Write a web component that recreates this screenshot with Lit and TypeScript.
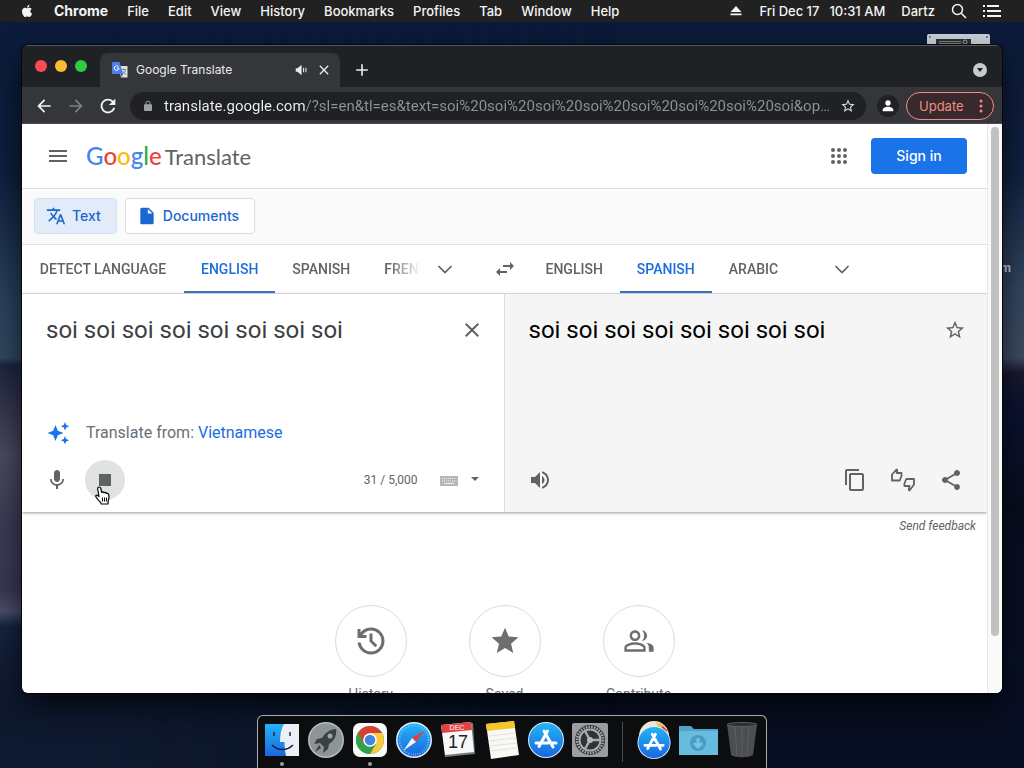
import { LitElement, html, css, svg, nothing } from "lit";
import { customElement, property } from "lit/decorators.js";
import { classMap } from "lit/directives/class-map.js";

const PATHS: Record<string, string> = {
  menu: "M3 18h18v-2H3v2zm0-5h18v-2H3v2zm0-7v2h18V6H3z",
  translate:
    "M12.87 15.07l-2.54-2.51.03-.03c1.74-1.94 2.98-4.17 3.71-6.53H17V4h-7V2H8v2H1v1.99h11.17C11.5 7.92 10.44 9.75 9 11.35 8.07 10.32 7.3 9.19 6.69 8h-2c.73 1.63 1.73 3.17 2.98 4.56l-5.09 5.02L4 19l5-5 3.11 3.11.76-2.04zM18.5 10h-2L12 22h2l1.12-3h4.75L21 22h2l-4.5-12zm-2.62 7l1.62-4.33L19.12 17h-3.24z",
  file: "M6 2c-1.1 0-1.99.9-1.99 2L4 20c0 1.1.89 2 1.99 2H18c1.1 0 2-.9 2-2V8l-6-6H6zm7 7V3.5L18.5 9H13z",
  swap: "M6.99 11L3 15l3.99 4v-3H14v-2H6.99v-3zM21 9l-3.99-4v3H10v2h7.01v3L21 9z",
  close: "M19 6.41L17.59 5 12 10.59 6.41 5 5 6.41 10.59 12 5 17.59 6.41 19 12 13.41 17.59 19 19 17.59 13.41 12z",
  mic: "M12 14c1.66 0 2.99-1.34 2.99-3L15 5c0-1.66-1.34-3-3-3S9 3.34 9 5v6c0 1.66 1.34 3 3 3zm5.3-3c0 3-2.54 5.1-5.3 5.1S6.7 14 6.7 11H5c0 3.41 2.72 6.23 6 6.72V21h2v-3.28c3.28-.48 6-3.3 6-6.72h-1.7z",
  stop: "M6 6h12v12H6z",
  volume:
    "M3 9v6h4l5 5V4L7 9H3zm13.5 3c0-1.77-1.02-3.29-2.5-4.03v8.05c1.48-.73 2.5-2.25 2.5-4.02zM14 3.23v2.06c2.89.86 5 3.54 5 6.71s-2.11 5.85-5 6.71v2.06c4.01-.91 7-4.49 7-8.77s-2.99-7.86-7-8.77z",
  copy: "M16 1H4c-1.1 0-2 .9-2 2v14h2V3h12V1zm3 4H8c-1.1 0-2 .9-2 2v14c0 1.1.9 2 2 2h11c1.1 0 2-.9 2-2V7c0-1.1-.9-2-2-2zm0 16H8V7h11v14z",
  share:
    "M18 16.08c-.76 0-1.44.3-1.96.77L8.91 12.7c.05-.23.09-.46.09-.7s-.04-.47-.09-.7l7.05-4.11c.54.5 1.25.81 2.04.81 1.66 0 3-1.34 3-3s-1.34-3-3-3-3 1.34-3 3c0 .24.04.47.09.7L8.04 9.81C7.5 9.31 6.79 9 6 9c-1.66 0-3 1.34-3 3s1.34 3 3 3c.79 0 1.5-.31 2.04-.81l7.12 4.16c-.05.21-.08.43-.08.65 0 1.61 1.31 2.92 2.92 2.92 1.61 0 2.92-1.31 2.92-2.92s-1.31-2.92-2.92-2.92z",
  starOutline:
    "M22 9.24l-7.19-.62L12 2 9.19 8.63 2 9.24l5.46 4.73L5.82 21 12 17.27 18.18 21l-1.63-7.03L22 9.24zM12 15.4l-3.76 2.27 1-4.28-3.32-2.88 4.38-.38L12 6.1l1.71 4.04 4.38.38-3.32 2.88 1 4.28L12 15.4z",
  star: "M12 17.27L18.18 21l-1.64-7.03L22 9.24l-7.19-.61L12 2 9.19 8.63 2 9.24l5.46 4.73L5.82 21z",
  history:
    "M12 21q-3.45 0-6.012-2.288T3.05 13H5.1q.35 2.6 2.313 4.3T12 19q2.925 0 4.963-2.037T19 12t-2.037-4.963T12 5q-1.725 0-3.225.8T6.25 8H9v2H3V4h2v2.35q1.275-1.6 3.113-2.475T12 3q1.875 0 3.513.713t2.85 1.924 1.925 2.85T21 12t-.712 3.513-1.925 2.85-2.85 1.925T12 21m2.8-4.8L11 12.4V7h2v4.6l3.2 3.2z",
  people:
    "M9 12c2.21 0 4-1.79 4-4s-1.79-4-4-4-4 1.79-4 4 1.79 4 4 4zm0-6.2c1.2 0 2.2 1 2.2 2.2s-1 2.2-2.2 2.2S6.8 9.2 6.8 8s1-2.2 2.2-2.2zM9 13c-2.67 0-8 1.34-8 4v3h16v-3c0-2.66-5.33-4-8-4zm6.2 5.2H2.8V17c0-.9 3.2-2.2 6.2-2.2s6.2 1.3 6.2 2.2v1.2zM14.2 11.9c2.1-.1 3.8-1.8 3.8-3.9s-1.7-3.9-3.8-4c1.2 1.1 1.6 2.5 1.6 4s-.4 2.9-1.6 3.9zM17.4 13.3c1.3.9 2 2.1 2 3.7v3H23v-3c0-2.1-2.9-3.3-5.6-3.7z",
  back: "M20 11H7.83l5.59-5.59L12 4l-8 8 8 8 1.41-1.41L7.83 13H20v-2z",
  forward: "M12 4l-1.41 1.41L16.17 11H4v2h12.17l-5.58 5.59L12 20l8-8z",
  reload:
    "M17.65 6.35C16.2 4.9 14.21 4 12 4c-4.42 0-7.99 3.58-7.99 8s3.57 8 7.99 8c3.73 0 6.84-2.55 7.73-6h-2.08c-.82 2.33-3.04 4-5.65 4-3.31 0-6-2.69-6-6s2.69-6 6-6c1.66 0 3.14.69 4.22 1.78L13 11h7V4l-2.35 2.35z",
  lock: "M18 8.5h-1v-2c0-2.76-2.24-5-5-5s-5 2.24-5 5v2H6c-1.1 0-2 .9-2 2V20c0 1.1.9 2 2 2h12c1.1 0 2-.9 2-2v-9.5c0-1.1-.9-2-2-2zm-2.9 0H8.9v-2c0-1.71 1.39-3.1 3.1-3.1s3.1 1.39 3.1 3.1v2z",
  person: "M12 11.5a4 4 0 1 0 0-8 4 4 0 0 0 0 8zm0 1.700c-3 0-8 1.500-8 4.300v2.500h16v-2.500c0-2.800-5-4.300-8-4.300z",
  plus: "M19 13h-6v6h-2v-6H5v-2h6V5h2v6h6v2z",
  sound: "M3 9v6h3l7 6V3L6 9H3zM15.500 8v8h1.800V8zM19.500 8v8h1.800V8z",
  apple:
    "M17.05 12.5c0-2.3 1.9-3.4 2-3.5-1.1-1.6-2.8-1.8-3.4-1.85-1.45-.15-2.8.85-3.55.85-.7 0-1.85-.8-3.05-.8-1.55 0-3 .9-3.8 2.3-1.65 2.85-.4 7 1.15 9.3.8 1.1 1.7 2.35 2.95 2.3 1.2-.05 1.65-.75 3.05-.75 1.45 0 1.85.75 3.1.75 1.3 0 2.1-1.15 2.85-2.25.9-1.3 1.25-2.55 1.3-2.6-.05-.05-2.55-1-2.6-3.75zM14.8 5.8c.6-.8 1.1-1.9.95-3-.9.05-2.05.65-2.7 1.4-.6.7-1.15 1.85-1 2.9 1.05.1 2.1-.5 2.75-1.3z",
  sparkle:
    "M9.500 4l2.300 5.700 5.700 2.300-5.700 2.300L9.500 20l-2.300-5.700L1.500 12l5.700-2.300zM19 1l1.200 3 3 1.200-3 1.200L19 9.400l-1.200-3-3-1.200 3-1.200zM19 15l1.200 3 3 1.200-3 1.200-1.200 3-1.200-3-3-1.200 3-1.200z",
};

const icon = (name: string, size = 24) =>
  html`<svg width=${size} height=${size} viewBox="0 0 24 24" fill="currentColor" aria-hidden="true">
    <path d=${PATHS[name]}></path>
  </svg>`;

const chevron = html`<svg width="24" height="24" viewBox="0 0 24 24" fill="none" stroke="currentColor" stroke-width="1.7" aria-hidden="true">
  <path d="M5.500 9L12 15.500 18.500 9"></path>
</svg>`;

const reset = css`
  *,
  *::before,
  *::after {
    box-sizing: border-box;
  }
  svg {
    display: block;
    flex: none;
  }
  button {
    display: flex;
    align-items: center;
    justify-content: center;
    margin: 0;
    padding: 0;
    border: 0;
    background: none;
    color: inherit;
    font: inherit;
  }
  a {
    color: inherit;
    text-decoration: none;
  }
`;

@customElement("menu-bar")
class MenuBar extends LitElement {
  static styles = [
    reset,
    css`
      :host {
        display: flex;
        align-items: center;
        justify-content: space-between;
        height: 22px;
        flex: none;
        padding: 0 23px 0 19px;
        background: #212121;
        color: #f4f4f4;
        font: 500 13px/22px Inter, Roboto, sans-serif;
        white-space: nowrap;
      }
      .menus,
      .status {
        display: flex;
        align-items: center;
      }
      .menus {
        gap: 19px;
      }
      .status {
        gap: 16px;
      }
      .app {
        font-size: 14px;
        font-weight: 700;
      }
      .clock {
        display: flex;
        gap: 10px;
      }
    `,
  ];

  render() {
    const menus = ["File", "Edit", "View", "History", "Bookmarks", "Profiles", "Tab", "Window", "Help"];
    return html`
      <nav class="menus">
        <button aria-label="Apple menu">${icon("apple", 16)}</button>
        <button class="app">Chrome</button>
        ${menus.map((m) => html`<button>${m}</button>`)}
      </nav>
      <div class="status">
        <svg width="14" height="14" viewBox="0 0 14 14" fill="currentColor"><path d="M7 2l5.500 6h-11zM1.500 9.500h11v1.800h-11z"></path></svg>
        <span class="clock"><span>Fri Dec 17</span><span>10:31 AM</span></span>
        <span>Dartz</span>
        <button aria-label="Search">
          <svg width="16" height="16" viewBox="0 0 16 16" fill="none" stroke="currentColor" stroke-width="1.500"><circle cx="6.500" cy="6.500" r="5"></circle><path d="M10.200 10.200L15 15"></path></svg>
        </button>
        <button aria-label="Notifications">
          <svg width="18" height="14" viewBox="0 0 18 14" fill="currentColor"><path d="M0 1h2v2H0zM4 1h12v2H4zM0 6h2v2H0zM4 6h14v2H4zM0 11h2v2H0zM4 11h14v2H4z"></path></svg>
        </button>
      </div>
    `;
  }
}

@customElement("browser-chrome")
class BrowserChrome extends LitElement {
  static styles = [
    reset,
    css`
      :host {
        display: block;
        flex: none;
        color: #e8eaed;
        font: 400 14px/20px Inter, Roboto, sans-serif;
      }
      .strip {
        display: flex;
        align-items: center;
        height: 42px;
        padding: 0 15px 0 13px;
        background: #202124;
        box-shadow: inset 0 1px #55575a;
      }
      .lights {
        display: flex;
        gap: 8px;
        margin-right: 13px;
      }
      .light {
        width: 12px;
        height: 12px;
        border-radius: 50%;
      }
      .red {
        background: #fc4a51;
      }
      .yellow {
        background: #fdbc2f;
      }
      .green {
        background: #2fcb42;
      }
      .tab {
        display: flex;
        align-items: center;
        align-self: flex-end;
        gap: 8px;
        width: 240px;
        height: 34px;
        padding: 0 8px 0 12px;
        border-radius: 8px 8px 0 0;
        background: #35363a;
        font-size: 12px;
      }
      .title {
        flex: 1;
      }
      .add {
        margin: 8px auto 0 12px;
      }
      .more {
        width: 14px;
        height: 14px;
        margin-top: 8px;
        border-radius: 50%;
        background: #c8cacd;
        color: #202124;
      }
      .bar {
        display: flex;
        align-items: center;
        height: 37px;
        padding: 0 8px 0 6px;
        background: #35363a;
        box-shadow: inset 0 -1px #4a4b4e;
      }
      .nav {
        width: 32px;
        height: 28px;
        color: #f1f3f4;
      }
      .off {
        color: #7d7f83;
      }
      .address {
        display: flex;
        align-items: center;
        flex: 1;
        min-width: 0;
        height: 28px;
        margin: 0 11px 0 6px;
        padding: 0 10px 0 12px;
        border-radius: 14px;
        background: #202124;
        color: #9aa0a6;
      }
      .url {
        flex: 1;
        min-width: 0;
        height: 20px;
        margin: 0 8px 0 10px;
        padding: 0;
        border: 0;
        outline: 0;
        background: linear-gradient(90deg, #f1f3f4 141px, #8f9398 141px);
        -webkit-background-clip: text;
        background-clip: text;
        color: transparent;
        -webkit-text-fill-color: transparent;
        font: 400 15px/20px Roboto, sans-serif;
        text-overflow: ellipsis;
      }
      .bookmark {
        color: #dadce0;
      }
      .avatar {
        width: 22px;
        height: 22px;
        margin-right: 7px;
        border-radius: 50%;
        background: #202124;
        color: #fff;
      }
      .update {
        justify-content: space-between;
        width: 88px;
        height: 28px;
        padding: 0 10px 0 12px;
        border: 1px solid #ee8d8d;
        border-radius: 14px;
        background: #38292c;
        color: #f28b82;
        font-size: 13px;
      }
    `,
  ];

  render() {
    return html`
      <div class="strip">
        <div class="lights">
          ${["red", "yellow", "green"].map((c) => html`<button class="light ${c}" aria-label=${c}></button>`)}
        </div>
        <div class="tab">
          <svg width="16" height="16" viewBox="0 0 16 16">
            <path d="M6 4h9.500v11.500H9z" fill="#dfe1dc"></path>
            <path d="M9 7.500h5M11.500 6.500v1M13.500 8c-.5 2-2 3.500-3.500 4.200M10.500 9c.8 1.500 2 2.700 3.500 3.500" stroke="#7c8b8e" fill="none"></path>
            <path d="M1 0h6.500l3.500 12H1a1 1 0 0 1-1-1V1a1 1 0 0 1 1-1z" fill="#4a80e8"></path>
            <path d="M8.500 12H11l-1.500 3z" fill="#2f55c0"></path>
            <path d="M7 6.100H4.900M6.300 4.500a2.300 2.300 0 1 0 .7 1.700" stroke="#fff" fill="none"></path>
          </svg>
          <span class="title">Google Translate</span>
          <button aria-label="Mute tab">${icon("sound", 14)}</button>
          <button aria-label="Close tab">${icon("close", 16)}</button>
        </div>
        <button class="add" aria-label="New tab">${icon("plus", 20)}</button>
        <button class="more" aria-label="Search tabs">
          <svg width="8" height="8" viewBox="0 0 8 8" fill="currentColor"><path d="M1 2h6L4 6z"></path></svg>
        </button>
      </div>
      <div class="bar">
        <button class="nav" aria-label="Back">${icon("back", 20)}</button>
        <button class="nav off" aria-label="Forward">${icon("forward", 20)}</button>
        <button class="nav" aria-label="Reload">${icon("reload", 22)}</button>
        <div class="address">
          ${icon("lock", 12)}
          <input
            class="url"
            aria-label="Address"
            .value=${"translate.google.com/?sl=en&tl=es&text=" + Array(8).fill("soi").join("%20") + "&op=translate"}
          />
          <button class="bookmark" aria-label="Bookmark">${icon("starOutline", 16)}</button>
        </div>
        <button class="avatar" aria-label="Profile">${icon("person", 16)}</button>
        <button class="update">
          <span>Update</span>
          <svg width="4" height="14" viewBox="0 0 4 14" fill="currentColor"><circle cx="2" cy="2" r="1.500"></circle><circle cx="2" cy="7" r="1.500"></circle><circle cx="2" cy="12" r="1.500"></circle></svg>
        </button>
      </div>
    `;
  }
}

@customElement("language-tabs")
class LanguageTabs extends LitElement {
  @property({ attribute: false }) languages: string[] = [];
  @property() selected = "";

  static styles = [
    reset,
    css`
      :host {
        display: flex;
        min-width: 0;
        font: 500 14px/20px Roboto, sans-serif;
        color: #5f6368;
      }
      .tabs {
        display: flex;
        flex: 1;
        min-width: 0;
        overflow: hidden;
        -webkit-mask-image: linear-gradient(90deg, #000 calc(100% - 32px), transparent);
        mask-image: linear-gradient(90deg, #000 calc(100% - 32px), transparent);
      }
      .tab {
        flex: none;
        height: 48px;
        padding: 0 17px;
        text-transform: uppercase;
      }
      .wide {
        min-width: 162px;
      }
      .on {
        color: #1a6dde;
        box-shadow: inset 0 -2px #3572c0;
      }
      .expand {
        width: 48px;
        height: 48px;
      }
    `,
  ];

  render() {
    return html`
      <div class="tabs" role="tablist">
        ${this.languages.map(
          (l) => html`<button
            role="tab"
            class=${classMap({ tab: true, on: l === this.selected, wide: l.length > 10 })}
            aria-selected=${l === this.selected}
          >
            ${l}
          </button>`,
        )}
      </div>
      <button class="expand" aria-label="More languages">${chevron}</button>
    `;
  }
}

@customElement("translate-page")
class TranslatePage extends LitElement {
  static styles = [
    reset,
    css`
      :host {
        display: flex;
        flex: 1;
        min-height: 0;
        overflow: hidden;
        background: #fff;
        color: #5f6368;
        font: 400 14px/20px Roboto, sans-serif;
      }
      .page {
        flex: 1;
        min-width: 0;
        overflow: hidden;
      }
      .scroll {
        width: 15px;
        padding: 3px 3px 57px;
        border-left: 1px solid #e8e8e8;
        background: #fafafa;
      }
      .thumb {
        width: 8px;
        height: 100%;
        border-radius: 4px;
        background: #c1c1c1;
      }
      .header {
        display: flex;
        align-items: center;
        height: 65px;
        padding: 0 20px 0 24px;
        border-bottom: 1px solid #e0e0e0;
      }
      .logo {
        display: flex;
        align-items: baseline;
        gap: 3px;
        margin: 0 auto 0 16px;
        font: 400 22px/28px Lato, Roboto, sans-serif;
      }
      .brand {
        font-size: 24px;
        font-weight: 500;
      }
      .b {
        color: #4285f4;
      }
      .r {
        color: #ea4335;
      }
      .y {
        color: #fbbc05;
      }
      .g {
        color: #34a853;
      }
      .signin {
        display: flex;
        align-items: center;
        justify-content: center;
        width: 96px;
        height: 36px;
        margin-left: 20px;
        border-radius: 4px;
        background: #1a73e8;
        color: #fff;
        font: 500 14px/20px Inter, Roboto, sans-serif;
      }
      .modes {
        display: flex;
        gap: 8px;
        padding: 9px 12px 10px;
        border-bottom: 1px solid #e0e0e0;
        background: #fafafa;
      }
      .mode {
        gap: 6px;
        height: 36px;
        padding: 0 15px 0 11px;
        border: 1px solid #dadce0;
        border-radius: 4px;
        background: #fff;
        color: #1967d2;
        font: 500 14px/20px Inter, Roboto, sans-serif;
      }
      .current {
        border-color: #d5e0f0;
        background: #e2ebf8;
      }
      .languages {
        display: grid;
        grid-template-columns: 1fr 48px 1fr;
        border-bottom: 1px solid #e0e0e0;
      }
      .from {
        margin-right: 12px;
      }
      .to {
        margin-right: 121px;
      }
      .panels {
        display: grid;
        grid-template-columns: 1fr 1fr;
        box-shadow: 0 1px 3px rgba(0, 0, 0, 0.4);
      }
      .panel {
        display: flex;
        flex-direction: column;
        min-height: 218px;
        padding: 16px 12px 12px 24px;
      }
      .source {
        border-right: 1px solid #dadce0;
      }
      .target {
        background: #f5f5f5;
      }
      .row {
        display: flex;
        flex: 1;
        align-items: flex-start;
      }
      .text {
        flex: 1;
        min-width: 0;
        height: 40px;
        margin: 0;
        padding: 4px 0;
        border: 0;
        outline: 0;
        resize: none;
        overflow: hidden;
        background: none;
        color: #3c4043;
        font: 400 24px/32px Roboto, sans-serif;
      }
      .target .text {
        color: #000;
      }
      .round {
        width: 40px;
        height: 40px;
        flex: none;
        border-radius: 50%;
      }
      .active {
        position: relative;
        background: #e0e2e2;
      }
      .pointer {
        position: absolute;
        left: 10px;
        top: 26px;
      }
      .hint {
        display: flex;
        align-items: center;
        gap: 16px;
        margin-bottom: 15px;
        color: #6b6f73;
        font-size: 16px;
        line-height: 24px;
      }
      .spark {
        color: #1a73e8;
      }
      .link {
        color: #1a6dde;
      }
      .tools {
        display: flex;
        align-items: center;
        gap: 8px;
        margin-left: -9px;
        padding-right: 4px;
      }
      .count {
        margin-left: auto;
        font-size: 12px;
      }
      .keyboard {
        gap: 12px;
        width: 40px;
        margin: 0 8px 0 14px;
      }
      .push {
        margin-left: auto;
      }
      .feedback {
        padding: 6px 11px 0;
        font-size: 12px;
        font-style: italic;
        line-height: 16px;
        text-align: right;
      }
      .actions {
        display: flex;
        justify-content: center;
        margin-top: 71px;
      }
      .action {
        flex-direction: column;
        gap: 8px;
        width: 134px;
        color: #6e6e6e;
        line-height: 18px;
      }
      .circle {
        display: flex;
        align-items: center;
        justify-content: center;
        width: 72px;
        height: 72px;
        border: 1px solid #dadce0;
        border-radius: 50%;
      }
    `,
  ];

  render() {
    const phrase = Array(8).fill("soi").join(" ");
    return html`
      <main class="page">
        <header class="header">
          <button aria-label="Main menu">${icon("menu")}</button>
          <a class="logo" href="#">
            <span class="brand"
              ><span class="b">G</span><span class="r">o</span><span class="y">o</span><span class="b">g</span><span class="g">l</span
              ><span class="r">e</span></span
            >
            <span>Translate</span>
          </a>
          <button aria-label="Google apps">
            <svg width="24" height="24" viewBox="0 0 24 24" fill="currentColor">
              ${[6, 12, 18].map((y) => [6, 12, 18].map((x) => svg`<circle cx=${x} cy=${y} r="2"></circle>`))}
            </svg>
          </button>
          <a class="signin" href="#">Sign in</a>
        </header>
        <nav class="modes">
          <button class="mode current">${icon("translate", 20)}<span>Text</span></button>
          <button class="mode">${icon("file", 20)}<span>Documents</span></button>
        </nav>
        <div class="languages">
          <language-tabs class="from" selected="English" .languages=${["Detect language", "English", "Spanish", "French"]}></language-tabs>
          <button aria-label="Swap languages">${icon("swap")}</button>
          <language-tabs class="to" selected="Spanish" .languages=${["English", "Spanish", "Arabic"]}></language-tabs>
        </div>
        <div class="panels">
          <section class="panel source">
            <div class="row">
              <textarea class="text" aria-label="Source text" .value=${phrase}></textarea>
              <button class="round" aria-label="Clear source text">${icon("close")}</button>
            </div>
            <div class="hint">
              <span class="spark">${icon("sparkle")}</span>
              <span>Translate from: <a class="link" href="#">Vietnamese</a></span>
            </div>
            <div class="tools">
              <button class="round" aria-label="Voice">${icon("mic")}</button>
              <button class="round active" aria-label="Stop listening">
                ${icon("stop")}
                <svg class="pointer" width="16" height="19" viewBox="0 0 16 19" fill="#fff" stroke="#000" stroke-width="1.200" stroke-linejoin="round">
                  <path d="M4.200 1c.9 0 1.400.6 1.600 1.500l.9 4c.3-.8 2-.8 2.300.3.500-.7 1.900-.5 2.200.6.700-.5 2.200-.1 2.500 1.300.4 1.900.5 4-.5 5.800L13 18H6.300c-.3-1.900-2.700-3-4.200-5.500-.8-1.200-1.600-1.900-1.300-2.700.4-1 1.900-.7 3.200.7L2.700 3c-.2-1.200.5-2 1.500-2z"></path>
                  <path d="M7.300 11.500l.3 4M9.500 11.500v4M11.600 11.500l-.2 4" fill="none" stroke-width="1"></path>
                </svg>
              </button>
              <span class="count">31 / 5,000</span>
              <button class="keyboard" aria-label="Input tools">
                <svg width="18" height="14" viewBox="0 0 18 14">
                  <rect y="3" width="18" height="10" fill="#b5b7b9"></rect>
                  <path d="M2 5.500h14M2 8h14" stroke="#f1f1f1" stroke-dasharray="1 1"></path>
                  <path d="M4 10.500h10" stroke="#f1f1f1"></path>
                </svg>
                <svg width="10" height="10" viewBox="0 0 10 10" fill="currentColor"><path d="M1 2h8L5 6z"></path></svg>
              </button>
            </div>
          </section>
          <section class="panel target">
            <div class="row">
              <div class="text">${phrase}</div>
              <button class="round" aria-label="Save translation">${icon("starOutline", 22)}</button>
            </div>
            <div class="tools">
              <button class="round" aria-label="Listen">${icon("volume")}</button>
              <button class="round push" aria-label="Copy translation">${icon("copy")}</button>
              <button class="round" aria-label="Rate this translation">
                <svg width="26" height="24" viewBox="0 0 26 24" fill="none" stroke="currentColor" stroke-width="1.800" stroke-linejoin="round">
                  <path d="M2 6.500L6.500 1.500l.8.800L6.600 5h4.900v3L9.700 12.500H2z"></path>
                  <path d="M24 16.500l-4.500 6-.8-.8.700-3.700h-5v-2.500l1.900-4.500H24z"></path>
                </svg>
              </button>
              <button class="round" aria-label="Share translation">${icon("share")}</button>
            </div>
          </section>
        </div>
        <div class="feedback"><a href="#">Send feedback</a></div>
        <div class="actions">
          ${[
            ["History", "history", 36],
            ["Saved", "star", 32],
            ["Contribute", "people", 32],
          ].map(
            ([label, name, size]) => html`<button class="action">
              <span class="circle">${icon(name as string, size as number)}</span><span>${label}</span>
            </button>`,
          )}
        </div>
      </main>
      <div class="scroll"><div class="thumb"></div></div>
    `;
  }
}

const storeGlyph = svg`
  <circle cx="18" cy="18" r="18" fill="#d9ecfb"></circle>
  <circle cx="18" cy="18" r="17" fill="url(#blue)"></circle>
  <path d="M19.500 9L11 24.500M16 9l9 16M8 21h12M23.500 21H28" stroke="#fff" stroke-width="3" stroke-linecap="round"></path>`;

const blueFill = svg`<defs><linearGradient id="blue" x1="0" y1="0" x2="0" y2="1"><stop offset="0" stop-color="#22b5f5"></stop><stop offset="1" stop-color="#1a66e0"></stop></linearGradient></defs>`;

const DOCK = [
  {
    name: "Finder",
    running: true,
    art: svg`${blueFill}<path d="M1 2h34v32H1z" fill="#eceff5"></path><path d="M1 2h19c-3 5-4 11-4 18h4.500c0 5 .5 9 1.500 14H1z" fill="url(#blue)"></path>
      <path d="M10 10v4M26 10v4" stroke="#1b2a44" stroke-width="1.500"></path><path d="M8 23c6 6 15 6 21 0" fill="none" stroke="#12233c" stroke-width="1.500"></path>`,
  },
  {
    name: "Launchpad",
    art: svg`<circle cx="18" cy="18" r="18" fill="#b9bcbd"></circle><circle cx="18" cy="18" r="16.500" fill="#8d9495"></circle>
      <path d="M28 7c-6 0-11 4-14 9l-5 1-3 5 6-1 4 4-1 6 5-4 1-5c5-3 8-8 7-15z" fill="#3c4144"></path><circle cx="22" cy="14" r="2.500" fill="#9da3a4"></circle><path d="M11 23l-4 7 6-4z" fill="#3c4144"></path>`,
  },
  {
    name: "Chrome",
    running: true,
    art: svg`<rect x="1" y="1" width="34" height="34" rx="7" fill="#fafafa"></rect>
      <circle cx="18" cy="18" r="14" fill="#34a04c"></circle>
      <path d="M18 18L5.900 11A14 14 0 0 1 30.100 11z" fill="#da3e35"></path><path d="M5.900 11L12 21.500 18 18 18 11z" fill="#da3e35"></path>
      <path d="M18 11h12.100A14 14 0 0 1 18 32l6-10.500z" fill="#f8cc3c"></path>
      <path d="M5.900 11A14 14 0 0 0 18 32l6-10.500L18 18l-6 3.500z" fill="#34a04c"></path>
      <circle cx="18" cy="18" r="6.800" fill="#fff"></circle><circle cx="18" cy="18" r="5.300" fill="#4285e8"></circle>`,
  },
  {
    name: "Safari",
    art: svg`${blueFill}<circle cx="18" cy="18" r="18" fill="#dceefa"></circle><circle cx="18" cy="18" r="16.500" fill="url(#blue)"></circle>
      <circle cx="18" cy="18" r="14.500" fill="none" stroke="#9ed6fa" stroke-width="2" stroke-dasharray=".6 1.700"></circle>
      <path d="M28.500 8.500L20 20l-4-4z" fill="#ed3b3b"></path><path d="M7.500 28.500L16 16l4 4z" fill="#f2f4f6"></path>`,
  },
  {
    name: "Calendar",
    art: svg`<path d="M2 4l31-3 2 31-30 3z" fill="#77797b"></path><path d="M1 3l30-3 3 30-29 3z" fill="#f8f8f8"></path><path d="M1 3l30-3 1 8-30 3z" fill="#e34242"></path>
      <text x="17" y="8" text-anchor="middle" font-size="7" fill="#fff">DEC</text><text x="18" y="26" text-anchor="middle" font-size="18" fill="#222">17</text>`,
  },
  {
    name: "Notes",
    art: svg`<path d="M2 2l28-3 5 34-28 4z" fill="#f8f8f4"></path><path d="M2 2l28-3 1 7-28 3z" fill="#f6c42c"></path>
      <path d="M5 14l26-3M5 19l27-3M6 24l27-3M7 29l26-3" stroke="#dcdcd8" stroke-width=".8"></path>`,
  },
  { name: "App Store", art: svg`${blueFill}${storeGlyph}` },
  {
    name: "System Preferences",
    art: svg`<rect y="1" width="36" height="34" rx="2" fill="#9b9da0"></rect><circle cx="18" cy="18" r="15" fill="#303235"></circle>
      <circle cx="18" cy="18" r="13" fill="none" stroke="#a9abad" stroke-width="2.500" stroke-dasharray="1.500 1.200"></circle>
      <circle cx="18" cy="18" r="10.500" fill="none" stroke="#a9abad" stroke-width="2"></circle>
      <path d="M18 18h10M18 18l-5-9M18 18l-5 9" stroke="#a9abad" stroke-width="2.500"></path><circle cx="18" cy="18" r="3" fill="#b5b7b9"></circle>`,
  },
];

const STACKS = [
  {
    name: "Applications",
    art: svg`${blueFill}<circle cx="18" cy="14" r="15" fill="#f0e6d0"></circle><path d="M24 1l8 8-5 2z" fill="#d83c34"></path><path d="M20 0l7 3-3 5z" fill="#f2c13c"></path>
      <g transform="translate(1.500 4) scale(.92)">${storeGlyph}</g>`,
  },
  {
    name: "Downloads",
    art: svg`<path d="M-1 4h12l3 3h24v25H-1z" fill="#4fa3cb"></path><path d="M-1 9h39v24H-1z" fill="#67bbdf"></path>
      <circle cx="18" cy="21" r="8" fill="#4a9cc4"></circle><path d="M18 16v8M14 21l4 4 4-4" fill="none" stroke="#78c4e4" stroke-width="3"></path>`,
  },
  {
    name: "Trash",
    art: svg`<path d="M3 2h30l-4 31c-3 3-19 3-22 0z" fill="#4c4e50"></path><path d="M11 4l2 29M18 4v30M25 4l-2 29" stroke="#5d5f61"></path>
      <ellipse cx="18" cy="2.500" rx="15" ry="2" fill="#2c2d2f" stroke="#66686a" stroke-width=".8"></ellipse>`,
  },
];

@customElement("app-dock")
class AppDock extends LitElement {
  static styles = [
    reset,
    css`
      :host {
        display: flex;
        gap: 8px;
        align-self: center;
        flex: none;
        height: 53px;
        padding: 6px 6px 0;
        border: 1px solid #a9abb0;
        border-bottom: 0;
        border-radius: 6px 6px 0 0;
        background: #0c0d0f;
        font-family: "Liberation Sans", sans-serif;
      }
      .item {
        flex-direction: column;
        justify-content: flex-start;
        gap: 4px;
        width: 36px;
      }
      svg {
        overflow: visible;
      }
      .dot {
        width: 4px;
        height: 4px;
        border-radius: 50%;
        background: #9a9b9d;
      }
      .split {
        width: 1px;
        height: 40px;
        margin: 0 5px 0 6px;
        background: #4b4c4e;
      }
    `,
  ];

  item(entry: { name: string; art: unknown; running?: boolean }) {
    return html`<button class="item" aria-label=${entry.name}>
      <svg width="36" height="36" viewBox="0 0 36 36">${entry.art}</svg>
      ${entry.running ? html`<span class="dot"></span>` : nothing}
    </button>`;
  }

  render() {
    return html`${DOCK.map((e) => this.item(e))}<span class="split"></span>${STACKS.map((e) => this.item(e))}`;
  }
}

@customElement("app-root")
class AppRoot extends LitElement {
  static styles = [
    reset,
    css`
      :host {
        display: flex;
        flex-direction: column;
        height: 100vh;
        overflow: hidden;
      }
      .desktop {
        position: relative;
        display: flex;
        flex: 1;
        flex-direction: column;
        gap: 22px;
        min-height: 0;
        padding: 23px 22px 0;
        isolation: isolate;
        background: linear-gradient(
          #0b1a38 0%,
          #10203f 20%,
          #34465f 36%,
          #3c4b62 45%,
          #17192f 47%,
          #0b1230 52%,
          #080d1f 65%,
          #081026 85%,
          #070d20 100%
        );
      }
      .desktop::before {
        content: "";
        position: absolute;
        inset: 0;
        z-index: -1;
        background: linear-gradient(
          #0b1b3a 0%,
          #0d1e3e 20%,
          #2b425f 38%,
          #30475f 45%,
          #1d2540 46%,
          #262b44 48%,
          #36374f 52%,
          #4b4a62 58%,
          #3c3b55 68%,
          #3a3954 76%,
          #4b4f6b 79%,
          #16233f 81%,
          #0e1930 90%,
          #0f1a30 100%
        );
        -webkit-mask-image: linear-gradient(90deg, #000 10%, transparent 60%);
        mask-image: linear-gradient(90deg, #000 10%, transparent 60%);
      }
      .drive {
        position: absolute;
        top: 12px;
        right: 34px;
        z-index: -1;
      }
      .label {
        position: absolute;
        top: 238px;
        right: 13px;
        z-index: -1;
        color: #c9ced6;
        font: 700 12px/16px Roboto, sans-serif;
      }
      .window {
        display: flex;
        flex: 1;
        flex-direction: column;
        min-height: 0;
        overflow: hidden;
        border-radius: 6px;
        box-shadow: 0 0 0 1px #05070c, 0 14px 30px rgba(0, 0, 0, 0.7);
      }
    `,
  ];

  render() {
    return html`
      <menu-bar></menu-bar>
      <div class="desktop">
        <svg class="drive" width="63" height="20" viewBox="0 0 63 20">
          <rect width="63" height="24" rx="2" fill="#c8d0d8"></rect>
          <path d="M9 5h35v15H9z" fill="#2c3234"></path>
          <path d="M12 7.500h22M12 9.500h22" stroke="#7c8486"></path>
          <circle cx="38" cy="8" r="2" fill="none" stroke="#a0a8aa"></circle>
          <circle cx="3" cy="3" r="1" fill="#5c646c"></circle>
          <circle cx="60" cy="3" r="1" fill="#5c646c"></circle>
        </svg>
        <span class="label">m</span>
        <div class="window">
          <browser-chrome></browser-chrome>
          <translate-page></translate-page>
        </div>
        <app-dock></app-dock>
      </div>
    `;
  }
}
